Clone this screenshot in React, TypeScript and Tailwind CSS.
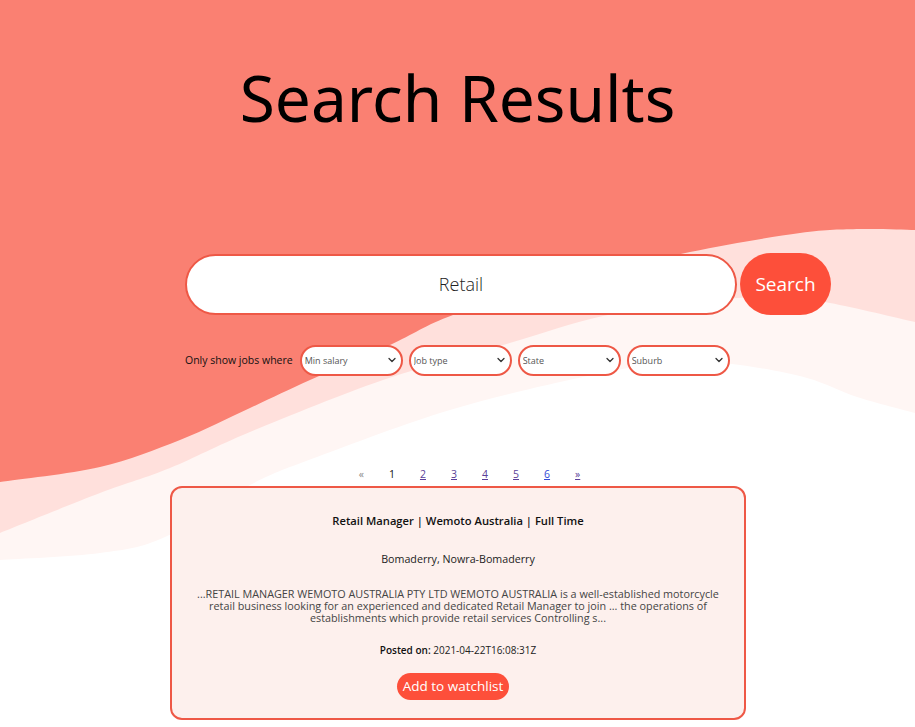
import React from "react";

type P = [number, number];

function smoothPath(pts: P[]): string {
  let d = `L${pts[0][0]},${pts[0][1]}`;
  for (let i = 0; i < pts.length - 1; i++) {
    const p0 = pts[i - 1] || pts[i];
    const p1 = pts[i];
    const p2 = pts[i + 1];
    const p3 = pts[i + 2] || p2;
    const c1x = p1[0] + (p2[0] - p0[0]) / 6;
    const c1y = p1[1] + (p2[1] - p0[1]) / 6;
    const c2x = p2[0] - (p3[0] - p1[0]) / 6;
    const c2y = p2[1] - (p3[1] - p1[1]) / 6;
    d += ` C${c1x.toFixed(1)},${c1y.toFixed(1)} ${c2x.toFixed(1)},${c2y.toFixed(1)} ${p2[0]},${p2[1]}`;
  }
  return d;
}

function layer(pts: P[]): string {
  return `M0,0 ${smoothPath(pts)} L915,0 Z`;
}

const B1: P[] = [
  [0, 482], [100, 467], [180, 440], [250, 408], [310, 380], [390, 345], [453, 315],
  [560, 283], [690, 252], [800, 233], [860, 229], [915, 230],
];
const B2: P[] = [
  [0, 533], [100, 493], [170, 468], [250, 432], [383, 380], [503, 345], [603, 316],
  [700, 301], [780, 297], [830, 303], [915, 322],
];
const B3: P[] = [
  [0, 560], [100, 553], [165, 537], [250, 485], [317, 457], [450, 410], [583, 377],
  [680, 361], [740, 365], [807, 378], [857, 397], [915, 413],
];

function Chevron() {
  return (
    <svg width="8" height="6" viewBox="0 0 8 6" className="pointer-events-none absolute right-[7px] top-[12px]">
      <path d="M1 1.5 L4 4.5 L7 1.5" fill="none" stroke="#333" strokeWidth="1.3" strokeLinecap="round" strokeLinejoin="round" />
    </svg>
  );
}

function FilterSelect({ label }: { label: string }) {
  return (
    <div className="relative h-[31px] w-[103px]">
      <select
        className="h-full w-full appearance-none rounded-full border-2 border-[#ee5846] bg-white pl-[3px] text-[9px] text-[#555] outline-none"
        defaultValue=""
      >
        <option value="">{label}</option>
      </select>
      <Chevron />
    </div>
  );
}

export default function App() {
  const font = "font-['Open_Sans','Noto_Sans',sans-serif]";
  return (
    <div className={`relative min-h-[727px] w-full overflow-hidden bg-white ${font}`}>
      <svg
        className="absolute left-0 top-0 h-[600px] w-[915px]"
        viewBox="0 0 915 600"
        preserveAspectRatio="none"
      >
        <path d={layer(B3)} fill="#fff6f4" />
        <path d={layer(B2)} fill="#ffe0dc" />
        <path d={layer(B1)} fill="#fa8072" />
      </svg>

      <div className="relative flex flex-col">
        <h1 className="mt-[58px] h-[80px] text-center font-['Noto_Sans',sans-serif] text-[64px] font-normal leading-[80px] text-black">
          Search Results
        </h1>

        <div className="mt-[115px] flex items-center pl-[185px]">
          <div className="flex h-[61px] w-[552px] items-center justify-center rounded-full border-2 border-[#ee5846] bg-white">
            <span className="text-[18px] font-light text-[#222]">Retail</span>
          </div>
          <button className="ml-[3px] h-[62px] w-[91px] rounded-full bg-[#fd4f3a] text-[19px] font-medium text-white">
            Search
          </button>
        </div>

        <div className="mt-[30px] flex items-center gap-[6px] pl-[185px]">
          <span className="mr-[1px] text-[10.5px] font-medium text-[#111]">Only show jobs where</span>
          <FilterSelect label="Min salary" />
          <FilterSelect label="Job type" />
          <FilterSelect label="State" />
          <FilterSelect label="Suburb" />
        </div>

        <div className="mt-[90px] flex justify-center gap-[25px] pl-[24px] text-[10.5px] leading-[16px]">
          <span className="text-[#888]">«</span>
          <span className="text-[#111]">1</span>
          <a href="#" className="text-[#5b3f99] underline">2</a>
          <a href="#" className="text-[#5b3f99] underline">3</a>
          <a href="#" className="text-[#5b3f99] underline">4</a>
          <a href="#" className="text-[#5b3f99] underline">5</a>
          <a href="#" className="text-[#3348d6] underline">6</a>
          <a href="#" className="text-[#5b3f99] underline">»</a>
        </div>

        <div className="ml-[170px] mt-[4px] flex w-[576px] flex-col items-center rounded-[12px] border-[2.5px] border-[#ee5846] bg-[#fdf0ed] pb-[18px] pt-[25px] text-center">
          <h2 className="text-[11.2px] font-semibold leading-[16px] text-[#111]">
            Retail Manager | Wemoto Australia | Full Time
          </h2>
          <p className="mt-[22px] text-[10.7px] leading-[16px] text-[#222]">Bomaderry, Nowra-Bomaderry</p>
          <p className="mt-[21px] w-[536px] text-[10.8px] leading-[12px] text-[#444]">
            ...RETAIL MANAGER WEMOTO AUSTRALIA PTY LTD WEMOTO AUSTRALIA is a well-established motorcycle retail business looking for an experienced and dedicated Retail Manager to join ... the operations of establishments which provide retail services Controlling s...
          </p>
          <p className="mt-[18px] text-[10px] leading-[16px] text-[#222]">
            <span className="font-semibold text-[#111]">Posted on:</span> 2021-04-22T16:08:31Z
          </p>
          <button className="mr-[10px] mt-[15px] h-[27px] w-[112px] rounded-full bg-[#fd4f3a] text-[13.5px] text-white">
            Add to watchlist
          </button>
        </div>
      </div>
    </div>
  );
}
